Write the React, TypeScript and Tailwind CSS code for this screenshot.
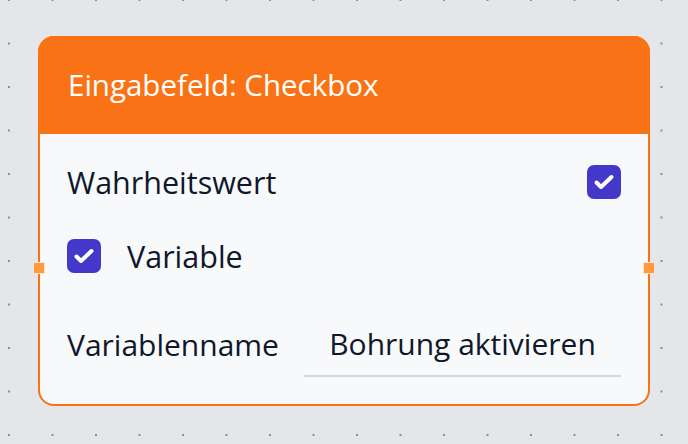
import React from "react";

function Check() {
  return (
    <div className="w-[34px] h-[34px] rounded-[7px] bg-[#4338ca] flex items-center justify-center shrink-0">
      <svg width="34" height="34" viewBox="0 0 34 34" fill="none">
        <path d="M9.5 17.5 L14 22 L24.5 12" stroke="white" strokeWidth="4" strokeLinecap="round" strokeLinejoin="round" />
      </svg>
    </div>
  );
}

export default function App() {
  return (
    <div
      className="w-[688px] h-[444px] bg-[#e5e6ea] overflow-hidden pt-[36px] pl-[38px] bg-[radial-gradient(circle,#8a8d94_1px,transparent_1.3px)] bg-[length:43.5px_43.5px] bg-[position:-12.75px_-21.75px]"
      style={{ fontFamily: '"Open Sans", "Noto Sans", sans-serif' }}
    >
      <div className="relative w-[612px] h-[370px] rounded-[16px] border-2 border-[#f97316] bg-[#f8f9fb] flex flex-col">
        <div className="h-[98px] -mt-[2px] -mx-[2px] rounded-t-[16px] bg-[#f97316] flex items-center pl-[30px] shrink-0">
          <span className="text-white text-[29.5px] leading-none">Eingabefeld: Checkbox</span>
        </div>
        <div className="flex flex-col px-[27px] pt-[31px]">
          <div className="h-[34px] flex items-center justify-between">
            <span className="text-[30.5px] leading-none text-[#0f172a]">Wahrheitswert</span>
            <Check />
          </div>
          <div className="h-[34px] mt-[40px] flex items-center">
            <Check />
            <span className="ml-[26px] text-[30.5px] leading-none text-[#0f172a]">Variable</span>
          </div>
          <div className="mt-[40px] flex items-center justify-between">
            <span className="text-[30px] leading-none text-[#0f172a]">Variablenname</span>
            <div className="w-[317px] h-[64px] border-b-2 border-[#d4d6dc] flex items-center justify-center">
              <span className="text-[30px] leading-none text-[#0f172a]">Bohrung aktivieren</span>
            </div>
          </div>
        </div>
        <div className="absolute left-[-7px] top-[224px] w-[12px] h-[12px] bg-[#ff9a3d] border border-[#ffe3cc]" />
        <div className="absolute right-[-7px] top-[224px] w-[12px] h-[12px] bg-[#ff9a3d] border border-[#ffe3cc]" />
      </div>
    </div>
  );
}
